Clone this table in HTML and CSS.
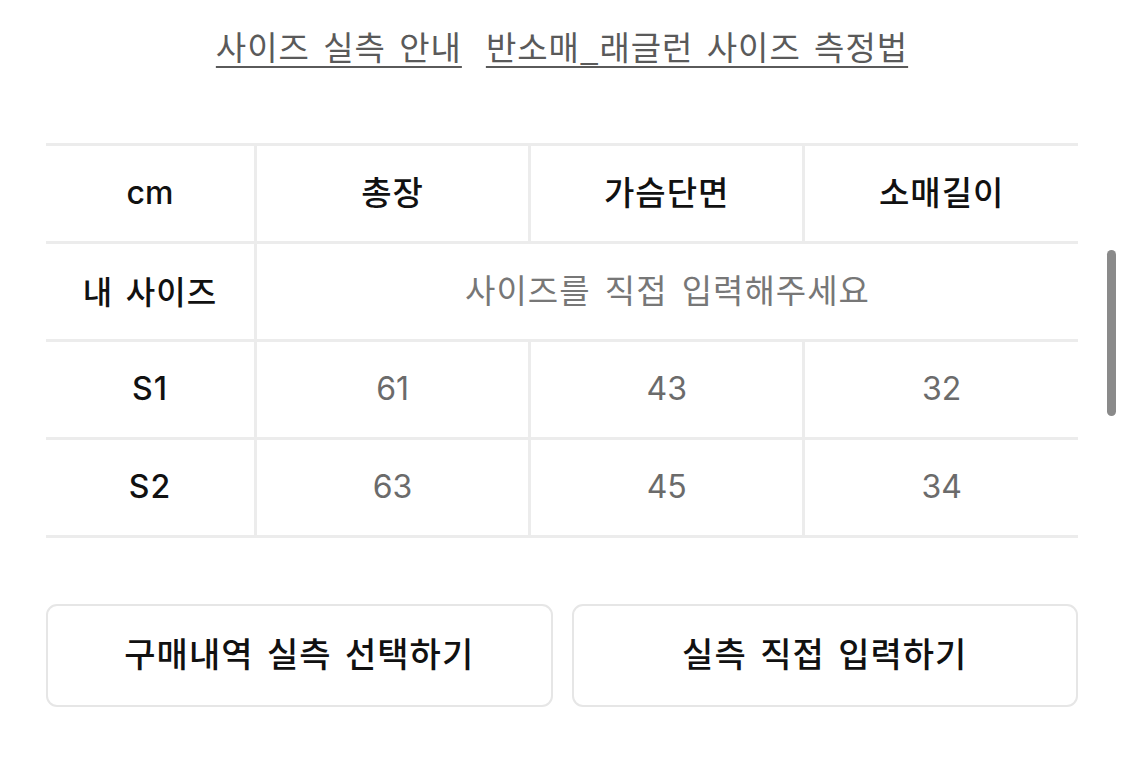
FILE: index.html
```html
<!DOCTYPE html>
<html lang="ko">
<head>
<meta charset="utf-8">
<link rel="stylesheet" href="styles.css">
</head>
<body>
<div class="page">
  <nav class="links">
    <a class="link">사이즈 실측 안내</a>
    <a class="link">반소매_래글런 사이즈 측정법</a>
  </nav>
  <table class="size-table">
    <tr class="head">
      <th>cm</th>
      <th>총장</th>
      <th>가슴단면</th>
      <th>소매길이</th>
    </tr>
    <tr>
      <th>내 사이즈</th>
      <td class="placeholder" colspan="3">사이즈를 직접 입력해주세요</td>
    </tr>
    <tr>
      <th>S1</th>
      <td>61</td>
      <td>43</td>
      <td>32</td>
    </tr>
    <tr>
      <th>S2</th>
      <td>63</td>
      <td>45</td>
      <td>34</td>
    </tr>
  </table>
  <div class="actions">
    <button class="btn">구매내역 실측 선택하기</button>
    <button class="btn">실측 직접 입력하기</button>
  </div>
</div>
<div class="scrollbar"></div>
</body>
</html>
```
FILE: styles.css
```css
html, body {
  margin: 0;
  padding: 0;
  background: #fff;
}
body {
  width: 1125px;
  height: 760px;
  overflow: hidden;
  position: relative;
  font-family: "Inter", "Noto Sans CJK KR", sans-serif;
}
.page {
  padding: 22px 47px 0 46px;
}
.links {
  display: flex;
  justify-content: center;
  gap: 24px;
  height: 50px;
}
.link {
  font-family: "Noto Sans CJK KR", sans-serif;
  font-size: 33px;
  line-height: 48px;
  letter-spacing: 1px;
  color: #5a5a5a;
  text-decoration: underline;
  text-decoration-thickness: 2px;
  text-underline-offset: 6px;
  word-spacing: 3px;
}
.size-table {
  margin-top: 71px;
  width: 100%;
  border-collapse: collapse;
  table-layout: fixed;
  border-top: 3px solid #ececec;
}
.size-table tr {
  height: 98px;
}
.size-table th,
.size-table td {
  border-bottom: 3px solid #ececec;
  border-left: 3px solid #ececec;
  text-align: center;
  vertical-align: middle;
  padding: 0 0 3px;
  font-size: 32px;
}
.size-table th:first-child {
  width: 208px;
  border-left: none;
}
.size-table th {
  font-weight: 500;
  color: #111;
  letter-spacing: 1px;
  word-spacing: 3px;
}
.size-table td {
  font-weight: 400;
  color: #6b6b6b;
}
.size-table td.placeholder {
  font-family: "Noto Sans CJK KR", sans-serif;
  color: #777;
  font-size: 33px;
  letter-spacing: 1px;
  word-spacing: 4px;
  padding-bottom: 6px;
}
.head th {
  font-size: 33px;
  padding-bottom: 6px;
}
.head th:first-child {
  font-size: 32px;
  letter-spacing: 0;
  padding-bottom: 3px;
}
.actions {
  display: flex;
  gap: 19px;
  margin-top: 66px;
}
.btn {
  flex: 1;
  height: 103px;
  border: 2px solid #e6e6e6;
  border-radius: 11px;
  background: #fff;
  font-family: "Noto Sans CJK KR", sans-serif;
  font-size: 34px;
  font-weight: 500;
  color: #111;
  letter-spacing: 1px;
  word-spacing: 3px;
  padding: 0 0 6px;
}
.scrollbar {
  position: absolute;
  left: 1107px;
  top: 250px;
  width: 9px;
  height: 166px;
  border-radius: 5px;
  background: #8a8a8a;
}
```
